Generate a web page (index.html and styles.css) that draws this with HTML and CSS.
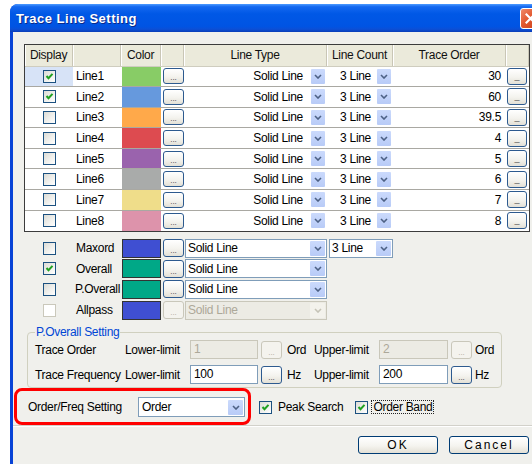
FILE: index.html
```html
<!DOCTYPE html>
<html>
<head>
<meta charset="utf-8">
<title>Trace Line Setting</title>
<link rel="stylesheet" href="styles.css">
</head>
<body>
<div class="window">
  <div class="titlebar">
    <span class="title">Trace Line Setting</span>
    <span class="close"><svg width="11" height="11" viewBox="0 0 11 11"><path d="M1.5 1.5 L9.5 9.5 M9.5 1.5 L1.5 9.5" stroke="#fff" stroke-width="2.2" stroke-linecap="square"/></svg></span>
  </div>
  <div class="client">
    <div class="table">
      <div class="row head">
        <div class="hc">Display</div>
        <div class="hc"></div>
        <div class="hc">Color</div>
        <div class="hc"></div>
        <div class="hc">Line Type</div>
        <div class="hc">Line Count</div>
        <div class="hc">Trace Order</div>
        <div class="hc"></div>
      </div>

      <div class="row">
        <div class="c-disp sel"><span class="cb on"><svg width="11" height="11" viewBox="0 0 11 11"><path d="M2.5 5 L4.5 7.2 L8.5 2.8" fill="none" stroke="#21a121" stroke-width="2"/></svg></span></div>
        <div class="c-name">Line1</div>
        <div class="c-color" style="background:#88cc66"></div>
        <div class="c-btn"><span class="dots">...</span></div>
        <div class="c-type">Solid Line<span class="drop"><svg width="8" height="5" viewBox="0 0 8 5"><path d="M1 1 L4 4 L7 1" fill="none" stroke="#4d6185" stroke-width="1.6"/></svg></span></div>
        <div class="c-count">3 Line<span class="drop"><svg width="8" height="5" viewBox="0 0 8 5"><path d="M1 1 L4 4 L7 1" fill="none" stroke="#4d6185" stroke-width="1.6"/></svg></span></div>
        <div class="c-order">30</div>
        <div class="c-last"><span class="dots bar">_</span></div>
      </div>

      <div class="row">
        <div class="c-disp"><span class="cb on"><svg width="11" height="11" viewBox="0 0 11 11"><path d="M2.5 5 L4.5 7.2 L8.5 2.8" fill="none" stroke="#21a121" stroke-width="2"/></svg></span></div>
        <div class="c-name">Line2</div>
        <div class="c-color" style="background:#6699dd"></div>
        <div class="c-btn"><span class="dots">...</span></div>
        <div class="c-type">Solid Line<span class="drop"><svg width="8" height="5" viewBox="0 0 8 5"><path d="M1 1 L4 4 L7 1" fill="none" stroke="#4d6185" stroke-width="1.6"/></svg></span></div>
        <div class="c-count">3 Line<span class="drop"><svg width="8" height="5" viewBox="0 0 8 5"><path d="M1 1 L4 4 L7 1" fill="none" stroke="#4d6185" stroke-width="1.6"/></svg></span></div>
        <div class="c-order">60</div>
        <div class="c-last"><span class="dots bar">_</span></div>
      </div>

      <div class="row">
        <div class="c-disp"><span class="cb"></span></div>
        <div class="c-name">Line3</div>
        <div class="c-color" style="background:#ffa94a"></div>
        <div class="c-btn"><span class="dots">...</span></div>
        <div class="c-type">Solid Line<span class="drop"><svg width="8" height="5" viewBox="0 0 8 5"><path d="M1 1 L4 4 L7 1" fill="none" stroke="#4d6185" stroke-width="1.6"/></svg></span></div>
        <div class="c-count">3 Line<span class="drop"><svg width="8" height="5" viewBox="0 0 8 5"><path d="M1 1 L4 4 L7 1" fill="none" stroke="#4d6185" stroke-width="1.6"/></svg></span></div>
        <div class="c-order">39.5</div>
        <div class="c-last"><span class="dots bar">_</span></div>
      </div>

      <div class="row">
        <div class="c-disp"><span class="cb"></span></div>
        <div class="c-name">Line4</div>
        <div class="c-color" style="background:#dd4b50"></div>
        <div class="c-btn"><span class="dots">...</span></div>
        <div class="c-type">Solid Line<span class="drop"><svg width="8" height="5" viewBox="0 0 8 5"><path d="M1 1 L4 4 L7 1" fill="none" stroke="#4d6185" stroke-width="1.6"/></svg></span></div>
        <div class="c-count">3 Line<span class="drop"><svg width="8" height="5" viewBox="0 0 8 5"><path d="M1 1 L4 4 L7 1" fill="none" stroke="#4d6185" stroke-width="1.6"/></svg></span></div>
        <div class="c-order">4</div>
        <div class="c-last"><span class="dots bar">_</span></div>
      </div>

      <div class="row">
        <div class="c-disp"><span class="cb"></span></div>
        <div class="c-name">Line5</div>
        <div class="c-color" style="background:#9a63ad"></div>
        <div class="c-btn"><span class="dots">...</span></div>
        <div class="c-type">Solid Line<span class="drop"><svg width="8" height="5" viewBox="0 0 8 5"><path d="M1 1 L4 4 L7 1" fill="none" stroke="#4d6185" stroke-width="1.6"/></svg></span></div>
        <div class="c-count">3 Line<span class="drop"><svg width="8" height="5" viewBox="0 0 8 5"><path d="M1 1 L4 4 L7 1" fill="none" stroke="#4d6185" stroke-width="1.6"/></svg></span></div>
        <div class="c-order">5</div>
        <div class="c-last"><span class="dots bar">_</span></div>
      </div>

      <div class="row">
        <div class="c-disp"><span class="cb"></span></div>
        <div class="c-name">Line6</div>
        <div class="c-color" style="background:#a9abaa"></div>
        <div class="c-btn"><span class="dots">...</span></div>
        <div class="c-type">Solid Line<span class="drop"><svg width="8" height="5" viewBox="0 0 8 5"><path d="M1 1 L4 4 L7 1" fill="none" stroke="#4d6185" stroke-width="1.6"/></svg></span></div>
        <div class="c-count">3 Line<span class="drop"><svg width="8" height="5" viewBox="0 0 8 5"><path d="M1 1 L4 4 L7 1" fill="none" stroke="#4d6185" stroke-width="1.6"/></svg></span></div>
        <div class="c-order">6</div>
        <div class="c-last"><span class="dots bar">_</span></div>
      </div>

      <div class="row">
        <div class="c-disp"><span class="cb"></span></div>
        <div class="c-name">Line7</div>
        <div class="c-color" style="background:#efdd8a"></div>
        <div class="c-btn"><span class="dots">...</span></div>
        <div class="c-type">Solid Line<span class="drop"><svg width="8" height="5" viewBox="0 0 8 5"><path d="M1 1 L4 4 L7 1" fill="none" stroke="#4d6185" stroke-width="1.6"/></svg></span></div>
        <div class="c-count">3 Line<span class="drop"><svg width="8" height="5" viewBox="0 0 8 5"><path d="M1 1 L4 4 L7 1" fill="none" stroke="#4d6185" stroke-width="1.6"/></svg></span></div>
        <div class="c-order">7</div>
        <div class="c-last"><span class="dots bar">_</span></div>
      </div>

      <div class="row last">
        <div class="c-disp"><span class="cb"></span></div>
        <div class="c-name">Line8</div>
        <div class="c-color" style="background:#dd93ab"></div>
        <div class="c-btn"><span class="dots">...</span></div>
        <div class="c-type">Solid Line<span class="drop"><svg width="8" height="5" viewBox="0 0 8 5"><path d="M1 1 L4 4 L7 1" fill="none" stroke="#4d6185" stroke-width="1.6"/></svg></span></div>
        <div class="c-count">3 Line<span class="drop"><svg width="8" height="5" viewBox="0 0 8 5"><path d="M1 1 L4 4 L7 1" fill="none" stroke="#4d6185" stroke-width="1.6"/></svg></span></div>
        <div class="c-order">8</div>
        <div class="c-last"><span class="dots bar">_</span></div>
      </div>
    </div>

    <div class="extra">
      <div class="xrow">
        <div class="c-disp"><span class="cb"></span></div>
        <div class="x-name">Maxord</div>
        <div><span class="sw" style="background:#3f4fd2"></span></div>
        <div><span class="dots tall">...</span></div>
        <div><span class="combo wide">Solid Line<span class="drop in"><svg width="8" height="5" viewBox="0 0 8 5"><path d="M1 1 L4 4 L7 1" fill="none" stroke="#4d6185" stroke-width="1.6"/></svg></span></span></div>
        <div><span class="combo short">3 Line<span class="drop in"><svg width="8" height="5" viewBox="0 0 8 5"><path d="M1 1 L4 4 L7 1" fill="none" stroke="#4d6185" stroke-width="1.6"/></svg></span></span></div>
      </div>
      <div class="xrow">
        <div class="c-disp"><span class="cb on"><svg width="11" height="11" viewBox="0 0 11 11"><path d="M2.5 5 L4.5 7.2 L8.5 2.8" fill="none" stroke="#21a121" stroke-width="2"/></svg></span></div>
        <div class="x-name">Overall</div>
        <div><span class="sw" style="background:#00a887"></span></div>
        <div><span class="dots tall">...</span></div>
        <div><span class="combo wide">Solid Line<span class="drop in"><svg width="8" height="5" viewBox="0 0 8 5"><path d="M1 1 L4 4 L7 1" fill="none" stroke="#4d6185" stroke-width="1.6"/></svg></span></span></div>
        <div></div>
      </div>
      <div class="xrow">
        <div class="c-disp"><span class="cb"></span></div>
        <div class="x-name tight">P.Overall</div>
        <div><span class="sw" style="background:#00a887"></span></div>
        <div><span class="dots tall">...</span></div>
        <div><span class="combo wide">Solid Line<span class="drop in"><svg width="8" height="5" viewBox="0 0 8 5"><path d="M1 1 L4 4 L7 1" fill="none" stroke="#4d6185" stroke-width="1.6"/></svg></span></span></div>
        <div></div>
      </div>
      <div class="xrow">
        <div class="c-disp"><span class="cb off"></span></div>
        <div class="x-name">Allpass</div>
        <div><span class="sw" style="background:#3f4fd2"></span></div>
        <div><span class="dots tall dis">...</span></div>
        <div><span class="combo wide dis">Solid Line<span class="drop in"><svg width="8" height="5" viewBox="0 0 8 5"><path d="M1 1 L4 4 L7 1" fill="none" stroke="#c5c3b6" stroke-width="1.6"/></svg></span></span></div>
        <div></div>
      </div>
    </div>

    <fieldset class="group">
      <legend>P.Overall Setting</legend>
      <div class="grow">
        <span>Trace Order</span>
        <span>Lower-limit</span>
        <span class="field dis">1</span>
        <span class="dots tall dis">...</span>
        <span>Ord</span>
        <span>Upper-limit</span>
        <span class="field up dis">2</span>
        <span class="dots tall dis">...</span>
        <span>Ord</span>
      </div>
      <div class="grow">
        <span>Trace Frequency</span>
        <span>Lower-limit</span>
        <span class="field">100</span>
        <span class="dots tall">...</span>
        <span>Hz</span>
        <span>Upper-limit</span>
        <span class="field up">200</span>
        <span class="dots tall">...</span>
        <span>Hz</span>
      </div>
    </fieldset>

    <div class="opts">
      <span class="opt-label">Order/Freq Setting</span>
      <span class="combo mode">Order<span class="drop in"><svg width="8" height="5" viewBox="0 0 8 5"><path d="M1 1 L4 4 L7 1" fill="none" stroke="#4d6185" stroke-width="1.6"/></svg></span></span>
      <span class="cb on peak"><svg width="11" height="11" viewBox="0 0 11 11"><path d="M2.5 5 L4.5 7.2 L8.5 2.8" fill="none" stroke="#21a121" stroke-width="2"/></svg></span>
      <span class="chk-label">Peak Search</span>
      <span class="cb on band"><svg width="11" height="11" viewBox="0 0 11 11"><path d="M2.5 5 L4.5 7.2 L8.5 2.8" fill="none" stroke="#21a121" stroke-width="2"/></svg></span>
      <span class="chk-label focus">Order Band</span>
    </div>

    <div class="sep"></div>

    <div class="actions">
      <button class="btn">OK</button>
      <button class="btn">Cancel</button>
    </div>

    <div class="mark"></div>
  </div>
</div>
</body>
</html>
```

FILE: styles.css
```css
html, body {
  margin: 0;
  background: #fff;
  overflow: hidden;
}

body {
  font-family: "Liberation Sans", Arial, sans-serif;
  font-size: 12px;
  letter-spacing: -0.3px;
  color: #000;
}

/* window frame */
.window {
  margin: 4px 0 0 10px;
  width: 545px;
  height: 470px;
  background: #0843d6;
  border-radius: 8px 8px 0 0;
  display: flex;
  flex-direction: column;
}

.titlebar {
  height: 28px;
  flex: none;
  display: flex;
  align-items: center;
  padding-left: 6px;
  border-radius: 8px 8px 0 0;
  background: linear-gradient(to bottom, #4d9bff 0%, #1468f0 10%, #0058e6 35%, #0054e3 80%, #0b4fd6 90%, #0a3cb8 100%);
}

.title {
  flex: 1;
  color: #fff;
  font-weight: bold;
  font-size: 13px;
  letter-spacing: 0.5px;
  text-shadow: 1px 1px 0 #0a2a8a;
}

.close {
  width: 21px;
  height: 21px;
  margin-right: 14px;
  box-sizing: border-box;
  border: 1px solid #fff;
  border-radius: 3px;
  background: linear-gradient(135deg, #f08b6a 0%, #e2582f 45%, #c6401b 100%);
  display: flex;
  align-items: center;
  justify-content: center;
}

.client {
  position: relative;
  flex: 1;
  margin: 0 3px;
  padding-top: 12px;
  background: #f0f0ec;
}

/* trace line table */
.table {
  margin-left: 11px;
  width: 506px;
  box-sizing: border-box;
  border: 1px solid #3c3c3c;
  background: #fff;
}

.row {
  display: grid;
  grid-template-columns: 48px 48px 40px 23px 143px 66px 113px 23px;
  height: 20.6px;
  box-sizing: border-box;
  border-bottom: 1px solid #a9a8a2;
}

.row.last {
  border-bottom: none;
  height: 20px;
}

.row.head {
  height: 21.5px;
  background: #ebeadb;
  border-bottom: 1px solid #cfcdbf;
}

.hc {
  display: flex;
  align-items: center;
  justify-content: center;
  border-right: 1px solid #c9c6b6;
  box-shadow: inset 1px 0 0 #fff;
  color: #111;
}

.row > div {
  display: flex;
  align-items: center;
  min-width: 0;
}

.c-disp {
  justify-content: center;
}

.sel {
  background: #d7e3f7;
}

.c-name {
  padding-left: 3px;
}

.c-color {
  margin-left: 1px;
}

.c-btn {
  padding-left: 2px;
}

.c-type {
  justify-content: flex-end;
  gap: 8px;
  padding-right: 2px;
}

.c-count {
  justify-content: flex-end;
  gap: 6px;
  padding-right: 2px;
}

.c-order {
  justify-content: flex-end;
  padding-right: 5px;
}

.c-last {
  padding-left: 1px;
}

/* checkboxes */
.cb {
  width: 13px;
  height: 13px;
  box-sizing: border-box;
  border: 1px solid #1c5180;
  background: linear-gradient(135deg, #dcdcd6 0%, #f2f2ef 60%, #fff 100%);
  display: inline-flex;
  align-items: center;
  justify-content: center;
  flex: none;
}

.cb.off {
  border-color: #cac8bb;
  background: #fff;
}

/* small "..." push buttons */
.dots {
  width: 21px;
  height: 16px;
  box-sizing: border-box;
  border: 1px solid #2d5a8f;
  border-radius: 3px;
  background: linear-gradient(to bottom, #fff 0%, #f4f3ee 55%, #e3e0d6 100%);
  display: inline-flex;
  align-items: flex-end;
  justify-content: center;
  font-size: 8px;
  line-height: 9px;
  letter-spacing: 0;
  color: #333;
  padding-bottom: 1px;
  flex: none;
}

.dots.bar {
  width: 20px;
  height: 17px;
  font-size: 9px;
  color: #555;
  padding-bottom: 3px;
}

.dots.tall {
  height: 18px;
}

.dots.dis {
  border-color: #c9c7ba;
  color: #aca899;
  background: #f4f3ee;
}

/* dropdown arrow buttons */
.drop {
  width: 14px;
  height: 15px;
  border-radius: 1px;
  background: linear-gradient(to bottom, #cbdafc 0%, #b8cbf7 100%);
  display: inline-flex;
  align-items: center;
  justify-content: center;
  flex: none;
}

.drop.in {
  width: 15px;
  height: 15px;
  margin-left: auto;
  margin-right: 1px;
}

/* additional traces */
.extra {
  margin: 6px 0 0 12px;
}

.xrow {
  display: grid;
  grid-template-columns: 48px 48px 40px 23px 143px 66px;
  height: 20.7px;
  align-items: center;
}

.xrow > div {
  display: flex;
  align-items: center;
}

.x-name {
  padding-left: 3px;
}

.x-name.tight {
  padding-left: 2px;
}

.sw {
  margin-left: 1px;
  width: 39px;
  height: 19px;
  box-sizing: border-box;
  border: 1px solid #333;
}

.xrow .dots {
  margin-left: 2px;
}

.combo {
  height: 19px;
  box-sizing: border-box;
  border: 1px solid #7f9db9;
  background: #fff;
  display: inline-flex;
  align-items: center;
  padding-left: 2px;
}

.combo.wide {
  margin-left: 1px;
  width: 143px;
}

.combo.short {
  margin-left: 2px;
  width: 64px;
}

.combo.dis {
  background: #ecebe4;
  border-color: #c9c7ba;
  color: #aca899;
}

.combo.dis .drop {
  background: #f3f2ec;
}

/* P.Overall group */
.group {
  margin: 5px 0 0 14px;
  width: 472px;
  box-sizing: border-box;
  border: 1px solid #d0d0bf;
  border-radius: 4px;
  padding: 1px 7px 3px;
}

.group legend {
  color: #0046d5;
  padding: 0 1px;
  line-height: 14px;
}

.grow {
  display: grid;
  grid-template-columns: 90px 65px 71px 26px 27px 65px 72px 24px auto;
  height: 19px;
  align-items: center;
}

.grow + .grow {
  margin-top: 6px;
}

.field {
  width: 68px;
  height: 19px;
  box-sizing: border-box;
  border: 1px solid #7f9db9;
  background: #fff;
  padding-left: 3px;
  line-height: 17px;
}

.field.up {
  width: 69px;
}

.field.dis {
  background: #ecebe4;
  border-color: #c9c7ba;
  color: #aca899;
}

/* mode and options row */
.opts {
  display: flex;
  align-items: center;
  height: 20px;
  margin-top: 9px;
  padding-left: 15px;
}

.opt-label {
  width: 110px;
}

.combo.mode {
  width: 107px;
  height: 20px;
  padding-left: 3px;
}

.cb.peak {
  margin-left: 14px;
}

.cb.band {
  margin-left: 12px;
}

.chk-label {
  margin-left: 6px;
}

.chk-label.focus {
  margin-left: 3px;
  border: 1px dotted #222;
  padding: 0 1px;
  line-height: 12px;
}

.sep {
  margin-top: 8px;
  border-top: 1px solid #d2d1ca;
  border-bottom: 1px solid #fff;
}

.actions {
  display: flex;
  gap: 11px;
  padding-left: 345px;
  margin-top: 9px;
}

.btn {
  width: 80px;
  height: 18px;
  box-sizing: border-box;
  border: 1px solid #003c74;
  border-radius: 3px;
  background: linear-gradient(to bottom, #fff 0%, #f5f4ef 55%, #e3e0d6 100%);
  font-family: "Liberation Sans", Arial, sans-serif;
  font-size: 12px;
  letter-spacing: 2px;
  color: #000;
  padding: 0;
}

/* red highlight frame drawn over the mode row */
.mark {
  position: absolute;
  left: 1px;
  top: 356px;
  width: 237px;
  height: 37px;
  box-sizing: border-box;
  border: 3px solid #ff0000;
  border-radius: 8px;
}
```
